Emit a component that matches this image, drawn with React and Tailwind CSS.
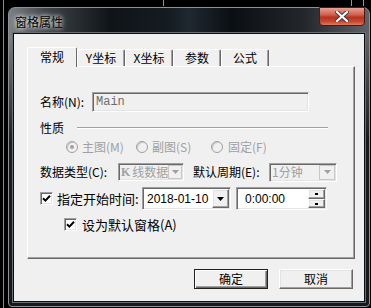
const sunken =
  "border border-t-[#a0a0a0] border-l-[#a0a0a0] border-r-white border-b-white shadow-[inset_1px_1px_0_#696969,inset_-1px_-1px_0_#e3e3e3]";
const raised =
  "border border-t-white border-l-white border-r-[#696969] border-b-[#696969] shadow-[inset_-1px_-1px_0_#a0a0a0,inset_1px_1px_0_#e3e3e3]";

const Arrow = ({ color = "#000" }) => (
  <svg width="7" height="4" viewBox="0 0 7 4">
    <path d="M0 0H7L3.5 4Z" fill={color} />
  </svg>
);

const Check = () => (
  <svg width="9" height="9" viewBox="0 0 9 9">
    <path d="M1 4.2 L3.4 6.6 L8 1.8" stroke="#000" strokeWidth="2" fill="none" />
  </svg>
);

const CheckBox = () => (
  <div className={`w-[13px] h-[13px] bg-white flex items-center justify-center ${sunken}`}>
    <Check />
  </div>
);

const Radio = ({ on }) => (
  <div className="w-[12px] h-[12px] rounded-full border border-[#a0a0a0] bg-[#f0f0f0] shadow-[inset_1px_1px_0_#c8c8c8] flex items-center justify-center">
    {on && <div className="w-[4px] h-[4px] rounded-full bg-[#a0a0a0]" />}
  </div>
);

const Tab = ({ label, active }) =>
  active ? (
    <div className="relative z-10 -mb-[1px] h-[20px] w-[50px] bg-[#f0f0f0] border-t border-l border-white border-r border-r-[#696969] rounded-t-[2px] flex items-center justify-center pb-[2px]">
      {label}
    </div>
  ) : (
    <div className="h-[17px] w-[48px] border-t border-l border-white border-r border-r-[#696969] shadow-[inset_-1px_0_0_#a0a0a0] rounded-t-[2px] flex items-center justify-center">
      {label}
    </div>
  );

const Btn = ({ label, def }) => (
  <div
    className={`w-[74px] h-[20px] flex items-center justify-center text-black ${
      def
        ? "border border-[#202020] shadow-[inset_1px_1px_0_#fff,inset_-1px_-1px_0_#696969,inset_-2px_-2px_0_#a0a0a0]"
        : raised
    }`}
  >
    {label}
  </div>
);

export default function App() {
  return (
    <div className="relative w-[371px] h-[308px] bg-black overflow-hidden font-['Noto_Sans_CJK_SC',sans-serif] text-[12px] leading-[14px] text-black">
      {/* stray chart lines behind the dialog */}
      <div className="absolute left-[3px] top-0 w-[1px] h-[308px] bg-[#8a8a8a]" />
      <div className="absolute left-[163px] top-0 w-[1px] h-[6px] bg-[#18c8d8]" />
      <div className="absolute left-[351px] top-0 w-[1px] h-[6px] bg-[#18c8d8]" />
      <div className="absolute left-[363px] top-0 w-[1px] h-[6px] bg-[#18c8d8]" />

      {/* window frame */}
      <div className="ml-[8px] mt-[7px] w-[362px] h-[300px] rounded-t-[7px] rounded-b-[4px] border border-[#8d9297] bg-[linear-gradient(180deg,transparent_0%,transparent_10%,rgba(14,18,22,0.9)_45%,#15191d_100%),linear-gradient(90deg,#7d8185_0%,#40454a_10%,#101418_28%,#141b21_44%,#1f2830_50%,#0b0f13_62%,#23272b_82%,#5f6367_100%)] flex flex-col">
        <div className="h-[26px] flex items-start">
          <span className="ml-[6px] mt-[7px] text-black [text-shadow:0_0_4px_#fff,0_0_6px_rgba(255,255,255,0.8)]">
            窗格属性
          </span>
          <div className="ml-auto mr-[4px] -mt-[1px] w-[46px] h-[19px] rounded-b-[4px] border border-[#4a1a14] bg-[linear-gradient(180deg,#e6a296_0%,#d0604e_40%,#b8321e_55%,#c44a32_80%,#e07a5e_100%)] flex items-center justify-center">
            <svg width="14" height="11" viewBox="0 0 14 11">
              <path
                d="M2 1 L12 10 M12 1 L2 10"
                stroke="#3a3a3a"
                strokeWidth="4"
                strokeLinecap="square"
              />
              <path
                d="M2 1 L12 10 M12 1 L2 10"
                stroke="#fff"
                strokeWidth="2.2"
                strokeLinecap="square"
              />
            </svg>
          </div>
        </div>

        {/* client area */}
        <div className="ml-[5px] w-[350px] h-[267px] bg-[#f0f0f0] shadow-[0_0_0_1px_#0a0c0e,0_0_0_2px_#6a6f74] pt-[13px] pl-[13px]">
          <div className="flex items-end h-[19px]">
            <Tab label="常规" active />
            <Tab label="Y坐标" />
            <Tab label="X坐标" />
            <Tab label="参数" />
            <Tab label="公式" />
          </div>

          <div className="w-[328px] h-[193px] border border-t-white border-l-white border-r-[#696969] border-b-[#696969] shadow-[inset_-1px_-1px_0_#a0a0a0] pl-[12px] flex flex-col">
            <div className="mt-[25px] h-[20px] flex items-center">
              <span className="w-[52px]">名称(N):</span>
              <div className={`w-[217px] h-[20px] bg-[#f0f0f0] flex items-center pl-[3px] font-['Liberation_Mono',monospace] text-[12px] text-[#6d6d6d] ${sunken}`}>
                Main
              </div>
            </div>

            <div className="mt-[9px] h-[14px] flex items-center">
              <span>性质</span>
              <div className="ml-[13px] w-[251px] h-[2px] border-t border-t-[#a0a0a0] border-b border-b-white" />
            </div>

            <div className="mt-[5px] h-[14px] flex items-center text-[#a0a0a0]">
              <div className="ml-[26px] w-[70px] flex items-center gap-[4px]">
                <Radio on />
                <span>主图(M)</span>
              </div>
              <div className="w-[75px] flex items-center gap-[4px]">
                <Radio />
                <span>副图(S)</span>
              </div>
              <div className="flex items-center gap-[5px]">
                <Radio />
                <span>固定(F)</span>
              </div>
            </div>

            <div className="mt-[9px] h-[18px] flex items-center">
              <span className="w-[78px]">数据类型(C):</span>
              <div className={`w-[66px] h-[18px] bg-[#f0f0f0] flex items-center justify-between text-[#a0a0a0] ${sunken}`}>
                <span className="pl-[2px] whitespace-nowrap flex items-center">
                  <span className="font-['Liberation_Serif',serif] font-bold text-[12px]">K</span>
                  <span className="ml-[2px]">线数据</span>
                </span>
                <div className="mr-[1px] w-[14px] h-[14px] shrink-0 border border-[#c8c8c8] flex items-center justify-center">
                  <Arrow color="#a0a0a0" />
                </div>
              </div>
              <span className="ml-[9px] w-[76px]">默认周期(E):</span>
              <div className={`w-[68px] h-[19px] bg-[#f0f0f0] flex items-center justify-between text-[#a0a0a0] ${sunken}`}>
                <span className="pl-[2px]">1分钟</span>
                <div className="mr-[1px] w-[16px] h-[15px] border border-[#c8c8c8] flex items-center justify-center">
                  <Arrow color="#a0a0a0" />
                </div>
              </div>
            </div>

            <div className="mt-[6px] h-[23px] flex items-center">
              <CheckBox />
              <span className="ml-[4px] w-[85px] text-[13px]">指定开始时间:</span>
              <div className={`w-[89px] h-[23px] bg-white flex items-center justify-between ${sunken}`}>
                <span className="pl-[4px] font-['Liberation_Sans',sans-serif] text-[12px]">2018-01-10</span>
                <div className={`mr-[1px] w-[17px] h-[19px] bg-[#f0f0f0] flex items-center justify-center ${raised}`}>
                  <Arrow />
                </div>
              </div>
              <div className={`ml-[5px] w-[91px] h-[23px] bg-white flex items-center justify-between ${sunken}`}>
                <span className="pl-[8px] font-['Liberation_Sans',sans-serif] text-[12px]">0:00:00</span>
                <div className="mr-[1px] w-[17px] h-[19px] flex flex-col">
                  <div className={`h-[10px] bg-[#f0f0f0] flex items-center justify-center ${raised}`}>
                    <div className="w-[3px] h-[2px] bg-black" />
                  </div>
                  <div className={`h-[9px] bg-[#f0f0f0] flex items-center justify-center ${raised}`}>
                    <div className="w-[3px] h-[2px] bg-black" />
                  </div>
                </div>
              </div>
            </div>

            <div className="mt-[8px] h-[13px] flex items-center">
              <div className="ml-[24px]">
                <CheckBox />
              </div>
              <span className="ml-[5px] text-[13px]">设为默认窗格(A)</span>
            </div>
          </div>

          <div className="mt-[10px] w-[326px] flex justify-end gap-[11px]">
            <Btn label="确定" def />
            <Btn label="取消" />
          </div>
        </div>
      </div>
    </div>
  );
}
